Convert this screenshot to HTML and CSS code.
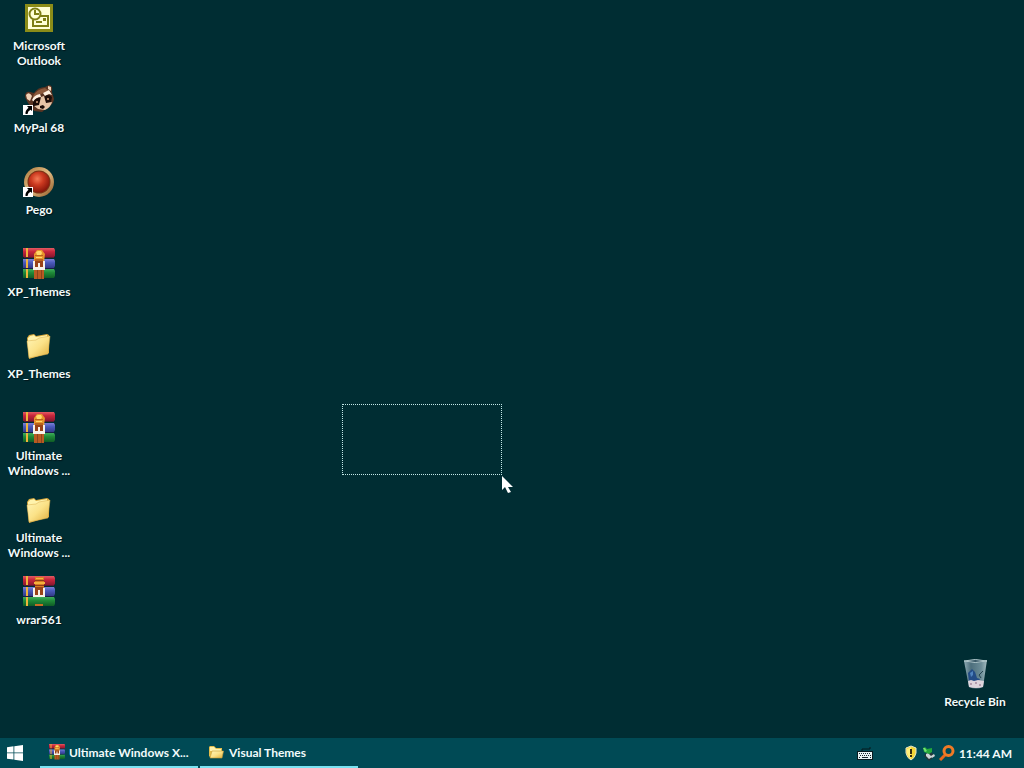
FILE: index.html
```
<!DOCTYPE html>
<html lang="en">
<head>
<meta charset="utf-8">
<meta name="viewport" content="width=device-width, initial-scale=1">
<title>Desktop</title>
<link rel="stylesheet" href="styles.css">
</head>
<body>
<svg class="defs" aria-hidden="true">
  <defs>
    <linearGradient id="red" x2="0" y2="1"><stop offset="0" stop-color="#e35b62"/><stop offset=".4" stop-color="#c8263c"/><stop offset="1" stop-color="#8a1830"/></linearGradient>
    <linearGradient id="blue" x2="0" y2="1"><stop offset="0" stop-color="#7c80d8"/><stop offset=".4" stop-color="#4a5abc"/><stop offset="1" stop-color="#323a88"/></linearGradient>
    <linearGradient id="green" x2="0" y2="1"><stop offset="0" stop-color="#3fae5c"/><stop offset=".4" stop-color="#1f8a38"/><stop offset="1" stop-color="#0f5c26"/></linearGradient>
    <linearGradient id="paper" x2="1" y2="1"><stop offset="0" stop-color="#fff6b8"/><stop offset=".5" stop-color="#fbe288"/><stop offset="1" stop-color="#dfae3c"/></linearGradient>
    <radialGradient id="ball" cx=".42" cy=".35" r=".65"><stop offset="0" stop-color="#f47a55"/><stop offset=".45" stop-color="#cc3a20"/><stop offset="1" stop-color="#86160a"/></radialGradient>
    <linearGradient id="ring" x2="1" y2="1"><stop offset="0" stop-color="#a87438"/><stop offset=".5" stop-color="#e2bd84"/><stop offset="1" stop-color="#8a5220"/></linearGradient>
    <linearGradient id="glass" x2="1"><stop offset="0" stop-color="#8fabb4"/><stop offset=".3" stop-color="#4c6e7c"/><stop offset=".75" stop-color="#6c8d98"/><stop offset="1" stop-color="#a2bbc0"/></linearGradient>
  </defs>
  <symbol id="books" viewBox="0 0 32 32">
    <path fill="url(#red)" d="M0 0h31l1 2v6l-1 1H0z"/>
    <path fill="url(#blue)" d="M0 11h31l1 2v5l-1 2H0z"/>
    <path fill="url(#green)" d="M0 21h31l1 2v5l-1 2H0z"/>
    <path fill="#f0b43c" d="M3 0h2v9H3zM3 11h2v9H3zM3 21h2v9H3z"/>
    <path fill="#5b1830" d="M1 9h30v1H1z"/><path fill="#191c48" d="M1 20h30v1H1z"/>
  </symbol>
  <symbol id="archive" viewBox="0 0 32 32">
    <use href="#books"/>
    <path fill="#b85a22" d="M11 21h10v10H11z"/><path fill="#8c431d" d="M14 22h1v9h-1zM18 22h1v9h-1z"/>
    <path fill="#e8942c" d="M11 6l3-4h5l3 4-1 8H11z"/>
    <path fill="#ffd868" d="M13 4l2-1h3l1 2-1 2h-4zM13 9h6v1h-6z"/>
    <path fill="#b8641d" d="M12 7h8v1h-8zM12 11h8v2h-8z"/>
    <path fill="#9a4318" d="M12 13h8v7h-8z"/>
    <path fill="#f7f1e8" d="M10 13h2v6h3v-4h2v4h3v-6h2v9H10z"/>
  </symbol>
  <symbol id="installer" viewBox="0 0 32 32">
    <use href="#books"/>
    <path fill="#d87a24" d="M12 1h9v12h-9z"/><path fill="#8b3b18" d="M12 4h9v1h-9zM12 9h9v1h-9z"/>
    <path fill="#f5b13e" d="M13 2h7v1h-7zM11 6h11v2H11z"/>
    <path fill="#c96b24" d="M12 28h8v2h-8z"/>
    <path fill="#9a4318" d="M12 11h8v8h-8z"/>
    <path fill="#f7f1e8" d="M10 12h2v7h3v-5h2v5h3v-7h2v9H10z"/>
  </symbol>
  <symbol id="shortcut" viewBox="0 0 10 10">
    <path fill="#fff" d="M0 0h10v10H0z"/>
    <path fill="#000" d="M4 1h5v5L7.500 4.700Q4.700 6 4.500 9H2.500Q2 5.500 5.500 2.800z"/>
  </symbol>
  <symbol id="folder" viewBox="0 0 32 32">
    <path fill="#d8a83c" d="M4 8l2-3 5-1 2 2 11-2 2 1v18L6 29z"/>
    <path fill="#fff3ac" d="M5 8l2-2 4-1 2 2 11-2v4L5 13z"/>
    <path fill="url(#paper)" stroke="#d8ad4c" stroke-width=".5" d="M4 11l9-1 3-2 11-2-2 18L6 28z"/>
  </symbol>
  <symbol id="windows" viewBox="0 0 16 16">
    <path fill="#fff" d="M0 2.300l6.500-1v6.200H0zM7.300 1.200L16 0v7.500H7.300zM0 8.300h6.500v6.300L0 13.700zM7.300 8.300H16V16l-8.700-1.200z"/>
  </symbol>
</svg>

<main class="desktop">
  <nav class="icons" aria-label="Desktop items">
    <button class="item"><svg class="icon" viewBox="0 0 32 32" aria-hidden="true">
      <path fill="#8b8c18" d="M2 2h28v28H2z"/><path fill="#ffffd6" d="M5 5h22v22H5z"/>
      <path fill="none" stroke="#7d7e14" stroke-width="2" d="M17 14h8v10H10v-6"/>
      <circle cx="12" cy="12" r="5.500" fill="#ffffd6" stroke="#7d7e14" stroke-width="2"/>
      <path fill="none" stroke="#7d7e14" stroke-width="2" d="M12 8v4h4M13 20h6"/><path fill="#7d7e14" d="M20 16h3v3h-3z"/>
    </svg><span class="label">Microsoft Outlook</span></button>
    <button class="item"><svg class="icon" viewBox="0 0 32 32" aria-hidden="true">
      <path fill="#5a3422" d="M2 13q0-6 5-5l4 1q4-6 11-6l4-2q4 0 3 7l2 7q-1 6-6 8l-6 5-8-1-6-8z"/>
      <path fill="#f0d2b6" d="M3 11q3-4 6 1l-2 5-3-2zM25 2l3 1v4l-3-2z"/>
      <path fill="#8c5a3c" d="M10 12q4-7 12-8l4 3-8 3-7 6z"/>
      <path fill="#fff1e0" d="M9 16q2-5 8-6l1 3q-5 0-7 5zM20 9l6-3 3 5-3-1-4 2z"/>
      <path fill="#1b0c08" d="M10 18q3-5 8-4l1 5-5 5-4-2zM21 13q4-4 8 0l-1 5-5 2z"/>
      <path fill="#e6c4a6" d="M18 13l3-1 2 7 6-1q-1 5-7 8l-7-1-4-3 5-1z"/>
      <path fill="#1b0c08" d="M17 22l3-1 2 2-2 2-3-1z"/>
      <circle cx="14" cy="18" r="1" fill="#d6a27d"/><circle cx="25" cy="15" r="1" fill="#d6a27d"/>
      <use href="#shortcut" y="21" width="10" height="10"/>
    </svg><span class="label">MyPal 68</span></button>
    <button class="item"><svg class="icon" viewBox="0 0 32 32" aria-hidden="true">
      <circle cx="16" cy="16" r="15" fill="url(#ring)"/><circle cx="16" cy="16" r="11.500" fill="#7c3316"/>
      <circle cx="16" cy="16" r="10.500" fill="url(#ball)"/>
      <use href="#shortcut" y="21" width="10" height="10"/>
    </svg><span class="label">Pego</span></button>
    <button class="item"><svg class="icon" aria-hidden="true"><use href="#archive"/></svg><span class="label">XP_Themes</span></button>
    <button class="item"><svg class="icon" aria-hidden="true"><use href="#folder"/></svg><span class="label">XP_Themes</span></button>
    <button class="item"><svg class="icon" aria-hidden="true"><use href="#archive"/></svg><span class="label">Ultimate Windows ...</span></button>
    <button class="item"><svg class="icon" aria-hidden="true"><use href="#folder"/></svg><span class="label">Ultimate Windows ...</span></button>
    <button class="item"><svg class="icon" aria-hidden="true"><use href="#installer"/></svg><span class="label">wrar561</span></button>
  </nav>
  <button class="item bin"><svg class="icon" viewBox="0 0 32 32" aria-hidden="true">
    <path fill="url(#glass)" d="M5 3l23-1-4 27q-7 3-14 0z"/>
    <path fill="#385766" stroke="#b1c8cc" d="M5 3q11-3 23 0-12 3-23 0z"/>
    <path fill="#234c86" d="M9 15l4-4 3 3 2 6 3 1-2 3H10z"/><path fill="#4f82bd" d="M11 15l3-2v4l-2 2z"/>
    <path fill="none" stroke="#26434f" d="M24 13l-4 4 2 3"/>
    <path fill="#ddd4dc" d="M9 23l3-1 3 1 4-1 6 1-1 6q-7 2-14 0z"/><path fill="#b39cae" d="M11 25h2v2h-2zM16 24h2v2h-2zM20 26h2v2h-2z"/>
  </svg><span class="label">Recycle Bin</span></button>
  <div class="marquee"></div>
  <svg class="pointer" viewBox="0 0 11 18" aria-hidden="true"><path fill="#fff" d="M0 0v14l3-3 3 6 3-1-3-5h5z"/></svg>
</main>

<footer class="taskbar">
  <button class="start" aria-label="Start"><svg class="small" aria-hidden="true"><use href="#windows"/></svg></button>
  <button class="task"><svg class="small" aria-hidden="true"><use href="#archive"/></svg><span>Ultimate Windows X...</span></button>
  <button class="task"><svg class="small" viewBox="0 0 16 16" aria-hidden="true">
    <path fill="#e3bd4c" d="M0 3l1-1h4l2 2h6v9H1l-1-1z"/><path fill="#fff2ad" d="M1 3h4l2 2h5v2H1z"/>
    <path fill="url(#paper)" stroke="#c79a32" stroke-width=".6" d="M3 7h11.500L13 14H1z"/>
  </svg><span>Visual Themes</span></button>
  <div class="tray">
    <button class="tool keyboard" aria-label="Keyboard"><svg class="small" viewBox="0 0 16 16" aria-hidden="true">
      <path fill="none" stroke="#07191d" d="M5 6V4h8V2"/><path fill="#071b20" d="M0 6h16v9H0z"/><path fill="#e8f4f4" d="M1 7h14v7H1z"/>
      <path stroke="#15282e" stroke-dasharray="1 1" d="M2 8.500h12M3 10.500h11"/><path stroke="#15282e" d="M2 12.500h1M5 12.500h6M13 12.500h1"/>
    </svg></button>
    <button class="tool" aria-label="Security"><svg class="small" viewBox="0 0 16 16" aria-hidden="true">
      <path fill="#f3d537" stroke="#e5e6c8" d="M8 1l5 2v5q-1 5-5 7-4-2-5-7V3z"/><path fill="#fff07b" d="M8 2v12Q5 12 4 8V4z"/>
      <path fill="#342c12" d="M7 4h2v5H7zM7 10h2v2H7z"/>
    </svg></button>
    <button class="tool" aria-label="Remove hardware"><svg class="small" viewBox="0 0 16 16" aria-hidden="true">
      <path fill="#24363a" d="M5 8l5-1 4 4-6 5-5-5z"/><path fill="#cbd6d8" d="M5 9l2-1 4 4-3 2-3-3zM10 11l3-2 1 2-3 2z"/>
      <path fill="#23a83c" d="M2 3l2-1 2 2 5-1v4L8 9 3 7z"/><path fill="#75df73" d="M2 3h2l2 3-2 1z"/>
    </svg></button>
    <button class="tool" aria-label="Search"><svg class="small" viewBox="0 0 16 16" aria-hidden="true">
      <path stroke="#e8681c" stroke-width="3" d="M6 10l-5 5"/><circle cx="9.500" cy="6" r="4.500" fill="none" stroke="#f07a25" stroke-width="3"/>
    </svg></button>
    <time class="clock">11:44 AM</time>
  </div>
</footer>
</body>
</html>
```
FILE: styles.css
```
* { box-sizing: border-box; }
body {
  margin: 0;
  min-height: 100vh;
  display: flex;
  flex-direction: column;
  background: #002d33;
  color: #f2fbfb;
  font: 700 12px/15px Lato, "Open Sans", sans-serif;
}
button {
  margin: 0;
  padding: 0;
  border: 0;
  background: none;
  color: inherit;
  font: inherit;
}
.defs { position: absolute; width: 0; height: 0; }
.desktop {
  position: relative;
  flex: 1;
  display: flex;
  justify-content: space-between;
}
.icons { display: flex; flex-direction: column; }
.item {
  width: 78px;
  height: 82px;
  padding-top: 2px;
  display: flex;
  flex-direction: column;
  align-items: center;
  gap: 4px;
}
.icon { width: 32px; height: 32px; flex: none; }
.label { width: 68px; text-align: center; text-shadow: 1px 1px 1px #001519; }
.bin { align-self: flex-end; margin-right: 10px; }
.bin .label { width: auto; white-space: nowrap; }
.marquee {
  position: absolute;
  left: 342px;
  top: 404px;
  width: 160px;
  height: 71px;
  border: 1px dotted #c3e8e8;
}
.pointer { position: absolute; left: 502px; top: 476px; width: 11px; height: 18px; }
.taskbar {
  height: 30px;
  display: flex;
  gap: 2px;
  background: #004a55;
}
.small { width: 16px; height: 16px; flex: none; }
.start { width: 38px; padding-left: 7px; text-align: left; }
.start .small { vertical-align: middle; }
.task {
  width: 158px;
  padding: 0 9px;
  display: flex;
  align-items: center;
  gap: 4px;
  border-bottom: 2px solid #79e3f2;
  white-space: nowrap;
}
.tray {
  margin-left: auto;
  padding-right: 12px;
  display: flex;
  align-items: center;
  gap: 2px;
}
.tool { display: flex; }
.keyboard { margin-right: 28px; }
.clock { margin-left: 2px; }
```
